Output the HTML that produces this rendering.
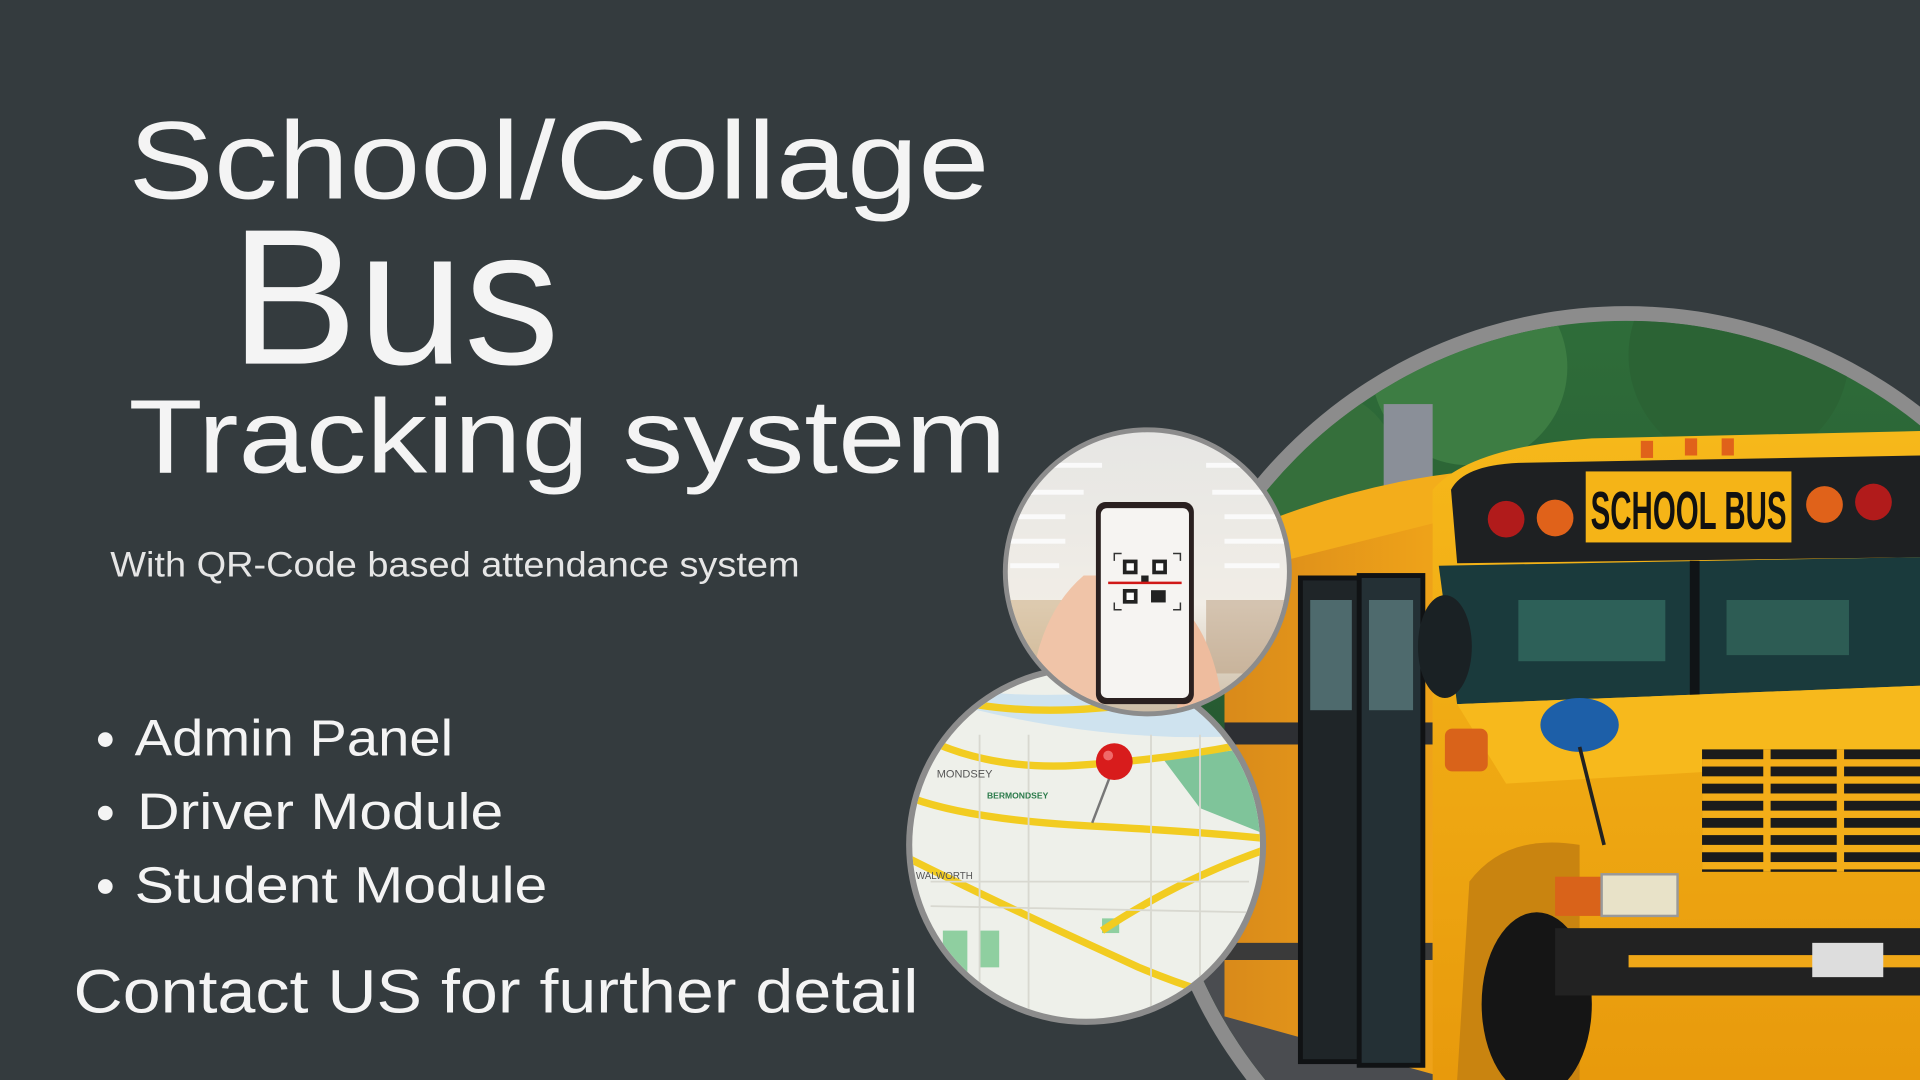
<!DOCTYPE html>
<html><head><meta charset="utf-8"><style>
html,body{margin:0;padding:0;background:#343b3e;width:1920px;height:1080px;overflow:hidden}
svg{display:block;position:absolute;left:0;top:0}
</style></head><body>
<svg width="1920" height="1080" viewBox="0 0 1568 882" preserveAspectRatio="none" xmlns="http://www.w3.org/2000/svg">
<defs>
<clipPath id="cb"><circle cx="1328" cy="642" r="380"/></clipPath>
<clipPath id="cq"><circle cx="937" cy="467" r="114"/></clipPath>
<clipPath id="cm"><circle cx="887" cy="690" r="142"/></clipPath>
<linearGradient id="tree" x1="0" y1="0" x2="0" y2="1"><stop offset="0" stop-color="#2f6e3a"/><stop offset="1" stop-color="#1f4a2a"/></linearGradient>
<linearGradient id="yel" x1="0" y1="0" x2="0" y2="1"><stop offset="0" stop-color="#f6b81a"/><stop offset="1" stop-color="#e89a0c"/></linearGradient>
<linearGradient id="side" x1="0" y1="0" x2="1" y2="0"><stop offset="0" stop-color="#d98a1a"/><stop offset="1" stop-color="#f0a419"/></linearGradient>
<linearGradient id="ceil" x1="0" y1="0" x2="0" y2="1"><stop offset="0" stop-color="#e6e6e4"/><stop offset="0.6" stop-color="#f1ede6"/><stop offset="1" stop-color="#c9b8a0"/></linearGradient>
</defs>
<rect width="1568" height="882" fill="#343b3e"/>

<circle cx="1328" cy="642" r="392" fill="#8c8c8c"/>
<g clip-path="url(#cb)">
<rect x="900" y="240" width="700" height="650" fill="url(#tree)"/>
<circle cx="1200" cy="300" r="80" fill="#3d7d43"/>
<circle cx="1420" cy="290" r="90" fill="#2b6334"/>
<circle cx="1080" cy="380" r="60" fill="#356f3b"/>
<rect x="1130" y="330" width="40" height="70" fill="#8a8f98"/>
<rect x="900" y="780" width="700" height="110" fill="#4a4c50"/>
<path d="M1000 440 L1180 400 L1180 880 L1000 830 Z" fill="url(#side)"/>
<path d="M1000 440 Q1100 395 1200 385 L1200 420 L1000 470Z" fill="#f3ad1b"/>
<rect x="1000" y="590" width="170" height="18" fill="#2d2f33"/>
<rect x="1000" y="770" width="170" height="14" fill="#3a3a3a"/>
<rect x="1062" y="472" width="52" height="395" fill="#1f2528" stroke="#101214" stroke-width="4"/>
<rect x="1110" y="470" width="52" height="400" fill="#243035" stroke="#101214" stroke-width="4"/>
<rect x="1070" y="490" width="34" height="90" fill="#4e6a6d"/>
<rect x="1118" y="490" width="36" height="90" fill="#4e6a6d"/>
<path d="M1170 400 Q1200 365 1300 358 L1568 352 L1568 882 L1170 882 Z" fill="url(#yel)"/>
<path d="M1185 400 Q1195 380 1240 378 L1568 372 L1568 455 L1190 460 Z" fill="#1e2022"/>
<rect x="1295" y="385" width="168" height="58" fill="#f5b417"/>
<text x="1299" y="432" font-family="Liberation Sans, sans-serif" font-weight="bold" font-size="44" fill="#111" textLength="160" lengthAdjust="spacingAndGlyphs">SCHOOL BUS</text>
<circle cx="1230" cy="424" r="15" fill="#b11b1b"/>
<circle cx="1270" cy="423" r="15" fill="#e0621a"/>
<circle cx="1490" cy="412" r="15" fill="#e0621a"/>
<circle cx="1530" cy="410" r="15" fill="#b11b1b"/>
<rect x="1340" y="360" width="10" height="14" fill="#e0621a"/>
<rect x="1376" y="358" width="10" height="14" fill="#e0621a"/>
<rect x="1406" y="358" width="10" height="14" fill="#e0621a"/>
<path d="M1175 462 L1568 455 L1568 560 L1190 575 Z" fill="#1a3a3c"/>
<rect x="1240" y="490" width="120" height="50" fill="#3a7a6a" opacity="0.6"/>
<rect x="1410" y="490" width="100" height="45" fill="#3f7d6b" opacity="0.5"/>
<rect x="1380" y="458" width="8" height="110" fill="#101416"/>
<ellipse cx="1180" cy="528" rx="22" ry="42" fill="#1a2124"/>
<path d="M1190 575 L1568 560 L1568 620 L1230 640 Z" fill="#f7b91c"/>
<rect x="1390" y="612" width="178" height="100" fill="#1b1b1b"/>
<g fill="#f3ad18">
<rect x="1390" y="620" width="178" height="6"/><rect x="1390" y="634" width="178" height="6"/><rect x="1390" y="648" width="178" height="6"/><rect x="1390" y="662" width="178" height="6"/><rect x="1390" y="676" width="178" height="6"/><rect x="1390" y="690" width="178" height="6"/><rect x="1390" y="704" width="178" height="6"/>
<rect x="1440" y="612" width="6" height="100"/><rect x="1500" y="612" width="6" height="100"/>
</g>
<path d="M1200 720 Q1230 680 1290 690 L1290 882 L1190 882Z" fill="#c98410"/>
<ellipse cx="1255" cy="820" rx="45" ry="75" fill="#151515"/>
<rect x="1180" y="595" width="35" height="35" rx="6" fill="#d9631a"/>
<rect x="1270" y="716" width="38" height="32" fill="#d9631a"/>
<rect x="1308" y="714" width="62" height="34" fill="#e8e2c8" stroke="#999" stroke-width="2"/>
<ellipse cx="1290" cy="592" rx="32" ry="22" fill="#1d5fa8"/>
<line x1="1290" y1="610" x2="1310" y2="690" stroke="#222" stroke-width="3"/>
<rect x="1270" y="758" width="300" height="55" fill="#222"/>
<rect x="1330" y="780" width="240" height="10" fill="#f0a818"/>
<rect x="1480" y="770" width="58" height="28" fill="#ddd"/>
</g>

<circle cx="887" cy="690" r="147" fill="#8c8c8c"/>
<g clip-path="url(#cm)">
<rect x="740" y="540" width="300" height="300" fill="#eef0ea"/>
<path d="M760 560 Q850 575 960 560 L1030 540 L1030 600 Q900 610 760 570Z" fill="#cfe3ef"/>
<path d="M950 620 L1030 610 L1030 680 L980 660Z" fill="#7fc49a"/>
<rect x="770" y="760" width="20" height="40" fill="#8fcfa0"/>
<rect x="800" y="760" width="16" height="30" fill="#8fcfa0"/>
<rect x="900" y="750" width="14" height="12" fill="#8fcfa0"/>
<g fill="none" stroke="#f2cc21" stroke-width="6">
<path d="M740 595 Q800 630 880 625 Q960 620 1030 605"/>
<path d="M740 650 Q790 670 900 675 Q990 680 1035 685"/>
<path d="M740 700 Q820 740 930 790 Q990 815 1030 820"/>
<path d="M900 760 Q960 720 1030 695"/>
<path d="M770 570 Q850 590 960 570"/>
</g>
<g stroke="#d8d8d0" stroke-width="1.5" fill="none">
<path d="M760 720 L1020 720 M760 740 L1020 745 M800 600 L800 840 M840 600 L840 840 M940 600 L940 840 M980 600 L980 840"/>
</g>
<text x="765" y="635" font-family="Liberation Sans, sans-serif" font-size="9" fill="#555">MONDSEY</text>
<text x="806" y="652" font-family="Liberation Sans, sans-serif" font-size="7" font-weight="bold" fill="#2a7a4a">BERMONDSEY</text>
<text x="748" y="718" font-family="Liberation Sans, sans-serif" font-size="8" fill="#555">WALWORTH</text>
<line x1="910" y1="625" x2="892" y2="672" stroke="#777" stroke-width="2"/>
<circle cx="910" cy="622" r="15" fill="#d81c1c"/>
<circle cx="905" cy="617" r="4" fill="#f06a6a"/>
</g>

<circle cx="937" cy="467" r="118" fill="#8c8c8c"/>
<g clip-path="url(#cq)">
<rect x="815" y="350" width="245" height="240" fill="url(#ceil)"/>
<g fill="#fafafa">
<rect x="860" y="378" width="40" height="4"/><rect x="985" y="378" width="40" height="4"/>
<rect x="840" y="400" width="45" height="4"/><rect x="990" y="400" width="50" height="4"/>
<rect x="830" y="420" width="40" height="4"/><rect x="1000" y="420" width="45" height="4"/>
<rect x="825" y="440" width="45" height="4"/><rect x="1000" y="440" width="50" height="4"/>
<rect x="825" y="460" width="40" height="4"/><rect x="1000" y="460" width="45" height="4"/>
</g>
<rect x="820" y="490" width="70" height="60" fill="#c9a777" opacity="0.5"/>
<rect x="985" y="490" width="70" height="60" fill="#b89a7a" opacity="0.5"/>
<path d="M842 560 Q850 500 885 470 L900 470 L900 590 L835 590Z" fill="#f0c4a8"/>
<path d="M970 500 Q995 530 1000 590 L960 590 Z" fill="#eebc9e"/>
<rect x="895" y="410" width="80" height="165" rx="8" fill="#2a2020"/>
<rect x="899" y="415" width="72" height="155" rx="5" fill="#f6f4f2"/>
<g fill="#222">
<rect x="917" y="457" width="12" height="12"/><rect x="941" y="457" width="12" height="12"/><rect x="917" y="481" width="12" height="12"/>
<rect x="932" y="470" width="6" height="6"/><rect x="940" y="482" width="12" height="10"/>
</g>
<g fill="#fff"><rect x="920" y="460" width="6" height="6"/><rect x="944" y="460" width="6" height="6"/><rect x="920" y="484" width="6" height="6"/></g>
<line x1="905" y1="476" x2="965" y2="476" stroke="#d01818" stroke-width="2"/>
<path d="M910 458 V452 H916 M958 452 H964 V458 M910 492 V498 H916 M958 498 H964 V492" stroke="#333" stroke-width="1.2" fill="none"/>
</g>

<g font-family="Liberation Sans, DejaVu Sans, sans-serif" fill="#f4f4f4">
<text x="105" y="162" font-size="90" textLength="703" lengthAdjust="spacingAndGlyphs">School/Collage</text>
<text x="188" y="297" font-size="158" textLength="269" lengthAdjust="spacingAndGlyphs">Bus</text>
<text x="105" y="386" font-size="86" textLength="717" lengthAdjust="spacingAndGlyphs">Tracking system</text>
<text x="90" y="471" font-size="29" fill="#e6e6e6" textLength="563" lengthAdjust="spacingAndGlyphs">With QR-Code based attendance system</text>
<circle cx="86" cy="604" r="6"/><circle cx="86" cy="664" r="6"/><circle cx="86" cy="724" r="6"/>
<text x="110" y="617" font-size="42" textLength="260" lengthAdjust="spacingAndGlyphs">Admin Panel</text>
<text x="112" y="677" font-size="42" textLength="299" lengthAdjust="spacingAndGlyphs">Driver Module</text>
<text x="110" y="737" font-size="42" textLength="337" lengthAdjust="spacingAndGlyphs">Student Module</text>
<text x="60" y="827" font-size="50" textLength="690" lengthAdjust="spacingAndGlyphs">Contact US for further detail</text>
</g>
</svg>
</body></html>
